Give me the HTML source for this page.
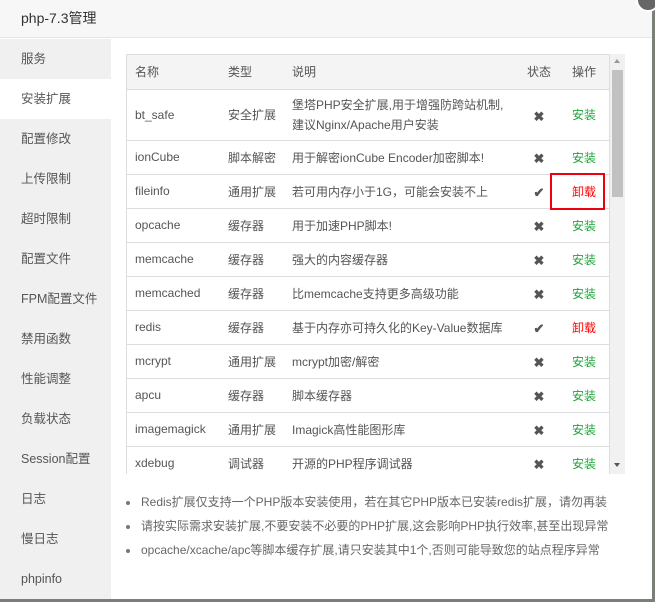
<!DOCTYPE html>
<html><head><meta charset="utf-8"><style>
*{margin:0;padding:0;box-sizing:border-box}
body{width:655px;height:602px;background:#7a7f78;position:relative;overflow:hidden;font-family:"Liberation Sans","Noto Sans CJK SC",sans-serif;font-size:12px;color:#555}
.win{position:absolute;left:0;top:0;width:652px;height:599px;background:#fff}
.title{height:38px;background:#f7f7f7;border-bottom:1px solid #e6e6e6;padding-left:21px;line-height:36px;font-size:14px;color:#333}
.close{position:absolute;left:636px;top:-12px;width:24px;height:24px;border-radius:50%;background:#666;border:2px solid #fff}
.side{position:absolute;left:0;top:39px;width:111px;height:560px;background:#f0f0f0}
.side div{height:40px;line-height:41px;padding-left:21px;font-size:12.5px;color:#555}
.side div.on{background:#fff}
.tbl{position:absolute;left:126px;top:54px;width:484px;height:420px;border:1px solid #ddd;border-bottom:none;overflow:hidden}
table{border-collapse:collapse;width:100%;table-layout:fixed}
td,th{font-weight:normal;text-align:left;border-bottom:1px solid #ddd;height:34px;padding:0;color:#555;font-size:12px}
th{background:#f4f4f4;height:34px}
.c1{padding-left:8px;width:101px}
.c2{width:64px}.c3{width:227px}.c4{width:40px;text-align:center}.c5{text-align:center}
.g{color:#20a53a}.r{color:#f00}
.x b{display:inline-block;position:relative;top:2px;color:#555;font-size:13px}
.sb{position:absolute;left:610px;top:54px;width:15px;height:420px;background:#f1f1f1}
.sb i{position:absolute;left:2px;top:16px;width:11px;height:127px;background:#c1c1c1}
.ua{position:absolute;left:4px;top:5px;border:3px solid transparent;border-bottom:4px solid #999;border-top:0}
.da{position:absolute;left:4px;top:409px;border:3px solid transparent;border-top:4px solid #555;border-bottom:0}
.box{position:absolute;left:550px;top:173px;width:55px;height:37px;border:2px solid #e01;}
ul{position:absolute;left:126px;top:492px;list-style:none;font-size:12px;color:#666}
li{height:24px;line-height:20px;padding-left:15px;position:relative}
li:before{content:"";position:absolute;left:0;top:9px;width:4px;height:4px;border-radius:50%;background:#777}
</style></head><body>
<div class="win">
<div class="title">php-7.3管理</div>
<div class="side">
<div>服务</div><div class="on">安装扩展</div><div>配置修改</div><div>上传限制</div><div>超时限制</div><div>配置文件</div><div>FPM配置文件</div><div>禁用函数</div><div>性能调整</div><div>负载状态</div><div>Session配置</div><div>日志</div><div>慢日志</div><div>phpinfo</div>
</div>
<div class="tbl"><table>
<tr><th class="c1">名称</th><th class="c2">类型</th><th class="c3">说明</th><th class="c4">状态</th><th class="c5">操作</th></tr>
<tr><td class="c1" style="height:51px">bt_safe</td><td>安全扩展</td><td style="line-height:20px">堡塔PHP安全扩展,用于增强防跨站机制,<br>建议Nginx/Apache用户安装</td><td class="c4 x"><b>✖</b></td><td class="c5 g">安装</td></tr>
<tr><td class="c1">ionCube</td><td>脚本解密</td><td>用于解密ionCube Encoder加密脚本!</td><td class="c4 x"><b>✖</b></td><td class="c5 g">安装</td></tr>
<tr><td class="c1">fileinfo</td><td>通用扩展</td><td>若可用内存小于1G，可能会安装不上</td><td class="c4 x"><b>✔</b></td><td class="c5 r">卸载</td></tr>
<tr><td class="c1">opcache</td><td>缓存器</td><td>用于加速PHP脚本!</td><td class="c4 x"><b>✖</b></td><td class="c5 g">安装</td></tr>
<tr><td class="c1">memcache</td><td>缓存器</td><td>强大的内容缓存器</td><td class="c4 x"><b>✖</b></td><td class="c5 g">安装</td></tr>
<tr><td class="c1">memcached</td><td>缓存器</td><td>比memcache支持更多高级功能</td><td class="c4 x"><b>✖</b></td><td class="c5 g">安装</td></tr>
<tr><td class="c1">redis</td><td>缓存器</td><td>基于内存亦可持久化的Key-Value数据库</td><td class="c4 x"><b>✔</b></td><td class="c5 r">卸载</td></tr>
<tr><td class="c1">mcrypt</td><td>通用扩展</td><td>mcrypt加密/解密</td><td class="c4 x"><b>✖</b></td><td class="c5 g">安装</td></tr>
<tr><td class="c1">apcu</td><td>缓存器</td><td>脚本缓存器</td><td class="c4 x"><b>✖</b></td><td class="c5 g">安装</td></tr>
<tr><td class="c1">imagemagick</td><td>通用扩展</td><td>Imagick高性能图形库</td><td class="c4 x"><b>✖</b></td><td class="c5 g">安装</td></tr>
<tr><td class="c1">xdebug</td><td>调试器</td><td>开源的PHP程序调试器</td><td class="c4 x"><b>✖</b></td><td class="c5 g">安装</td></tr>
</table></div>
<div class="sb"><span class="ua"></span><i></i><span class="da"></span></div>
<div class="box"></div>
<ul>
<li>Redis扩展仅支持一个PHP版本安装使用，若在其它PHP版本已安装redis扩展，请勿再装</li>
<li>请按实际需求安装扩展,不要安装不必要的PHP扩展,这会影响PHP执行效率,甚至出现异常</li>
<li>opcache/xcache/apc等脚本缓存扩展,请只安装其中1个,否则可能导致您的站点程序异常</li>
</ul>
</div>
<div class="close"></div>
</body></html>
